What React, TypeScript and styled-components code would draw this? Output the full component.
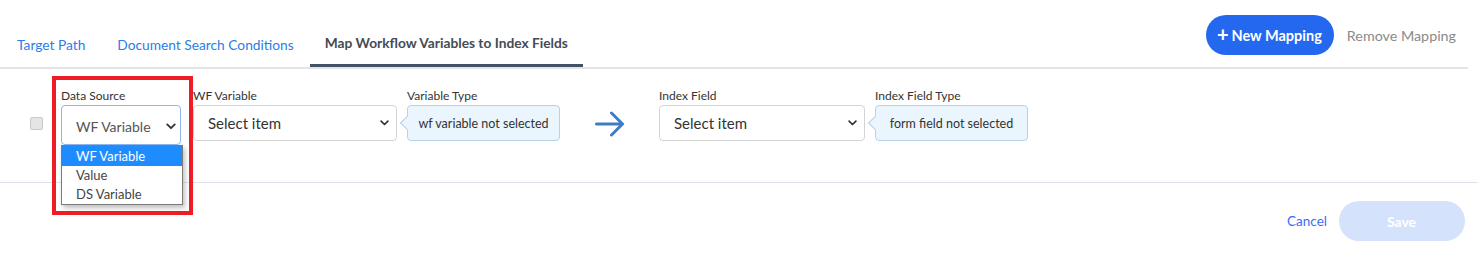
import React from "react";
import styled, { createGlobalStyle, css } from "styled-components";

const GlobalStyle = createGlobalStyle`
  html, body { margin: 0; padding: 0; background: #ffffff; }
  body { font-family: Lato, "Open Sans", sans-serif; color: #333; }
  * { box-sizing: border-box; }
`;

const Page = styled.div`
  width: 1484px;
  height: 264px;
  position: relative;
  overflow: hidden;
`;

const Header = styled.div`
  width: 1468px;
  height: 69px;
  display: flex;
  justify-content: space-between;
  align-items: stretch;
  border-bottom: 2px solid #e4e4e4;
`;

const Tabs = styled.div`
  display: flex;
  align-items: flex-end;
  padding-left: 1px;
`;

const Tab = styled.div<{ $active?: boolean }>`
  padding: 0 16px 10px;
  font-size: 13.75px;
  line-height: 18px;
  color: #2b7de9;
  border-bottom: 3px solid transparent;
  white-space: nowrap;
  ${(p) =>
    p.$active &&
    css`
      padding: 0 15px 12px;
      font-weight: 700;
      color: #444b55;
      border-bottom: 3px solid #435266;
    `}
`;

const Actions = styled.div`
  display: flex;
  align-items: center;
  gap: 13px;
  margin-top: 15px;
  align-self: flex-start;
  padding-right: 12px;
`;

const PrimaryButton = styled.button<{ $disabled?: boolean }>`
  height: 40px;
  border: none;
  border-radius: 20px;
  background: #2468ef;
  color: #fff;
  font-family: inherit;
  font-weight: 700;
  font-size: 14.5px;
  padding: 0 12px 0 11px;
  display: flex;
  align-items: center;
  gap: 3px;
  ${(p) =>
    p.$disabled &&
    css`
      background: #d5e2fb;
      width: 126px;
      justify-content: center;
      font-size: 14px;
    `}
`;

const Plus = styled.span`
  font-size: 20px;
  font-weight: 700;
  line-height: 1;
  margin-top: -2px;
`;

const TextButton = styled.span<{ $blue?: boolean }>`
  font-size: 14.3px;
  color: ${(p) => (p.$blue ? "#3b6cf4" : "#8a8a8a")};
  ${(p) => p.$blue && css`font-size: 13.5px;`}
`;

const Row = styled.div`
  width: 1478px;
  height: 114px;
  padding: 19px 0 0 30px;
  display: flex;
  align-items: flex-start;
  border-bottom: 1px solid #dde3ee;
`;

const Checkbox = styled.span`
  width: 13px;
  height: 13px;
  margin-top: 29px;
  margin-right: 18px;
  border: 1px solid #c9c9c9;
  border-radius: 2px;
  background: #e5e5e5;
`;

const Field = styled.div<{ $width: number; $gap?: number }>`
  width: ${(p) => p.$width}px;
  margin-right: ${(p) => p.$gap ?? 10}px;
  display: flex;
  flex-direction: column;
  position: relative;
`;

const Label = styled.label`
  font-size: 12px;
  line-height: 15px;
  color: #333;
  margin-bottom: 2px;
  white-space: nowrap;
`;

const SelectBox = styled.div<{ $focused?: boolean }>`
  height: ${(p) => (p.$focused ? 40 : 36)}px;
  border: 1px solid ${(p) => (p.$focused ? "#8db6f2" : "#d4d4d4")};
  border-radius: 4px;
  display: flex;
  align-items: center;
  justify-content: space-between;
  padding: 0 7px 0 14px;
  font-size: ${(p) => (p.$focused ? 14 : 15)}px;
  color: ${(p) => (p.$focused ? "#555" : "#333")};
  background: #fff;
  ${(p) => p.$focused && css`padding: 2px 4px 0 14px;`}
`;

const TypeBox = styled.div`
  height: 36px;
  border: 1px solid #b7d3ec;
  border-radius: 4px;
  background: #eaf5fd;
  display: flex;
  align-items: center;
  justify-content: center;
  font-size: 12.5px;
  color: #333;
  position: relative;
  &::before {
    content: "";
    position: absolute;
    left: -6px;
    top: 50%;
    width: 9px;
    height: 9px;
    margin-top: -5px;
    background: #eaf5fd;
    border-left: 1px solid #b7d3ec;
    border-bottom: 1px solid #b7d3ec;
    transform: rotate(45deg);
  }
`;

const ArrowSlot = styled.div`
  width: 30px;
  margin: 23px 34px 0 35px;
  color: #3d7cc9;
  display: flex;
`;

const DropList = styled.ul`
  position: absolute;
  left: 0;
  top: 57px;
  width: 122px;
  margin: 0;
  padding: 0;
  list-style: none;
  border: 1px solid #7a7a7a;
  background: #fff;
  box-shadow: 2px 3px 5px rgba(0, 0, 0, 0.25);
  z-index: 2;
`;

const DropItem = styled.li<{ $selected?: boolean }>`
  height: 19px;
  line-height: 19px;
  padding-left: 14px;
  font-size: 13px;
  color: ${(p) => (p.$selected ? "#fff" : "#444")};
  background: ${(p) => (p.$selected ? "#1e8cff" : "transparent")};
  ${(p) => p.$selected && css`height: 20px; line-height: 20px;`}
`;

const Highlight = styled.div`
  position: absolute;
  left: 52px;
  top: 76px;
  width: 141px;
  height: 139px;
  border: 4px solid #ee1c25;
  pointer-events: none;
  z-index: 3;
`;

const Footer = styled.div`
  width: 1465px;
  display: flex;
  justify-content: flex-end;
  align-items: center;
  gap: 12px;
  margin-top: 18px;
`;

const Chevron = ({ w, h }: { w: number; h: number }) => (
  <svg width={w} height={h} viewBox="0 0 12 8" fill="none">
    <path d="M1.5 1.5 L6 6 L10.5 1.5" stroke="#333" strokeWidth="2.2" strokeLinecap="round" strokeLinejoin="round" />
  </svg>
);

const Arrow = () => (
  <svg width="30" height="26" viewBox="0 0 30 26" fill="none">
    <path d="M1.5 13 H27" stroke="currentColor" strokeWidth="3" strokeLinecap="round" />
    <path d="M16.5 2 L27.5 13 L16.5 24" stroke="currentColor" strokeWidth="3" strokeLinecap="round" strokeLinejoin="round" />
  </svg>
);

export default function App() {
  return (
    <Page>
      <GlobalStyle />
      <Header>
        <Tabs>
          <Tab>Target Path</Tab>
          <Tab>Document Search Conditions</Tab>
          <Tab $active>Map Workflow Variables to Index Fields</Tab>
        </Tabs>
        <Actions>
          <PrimaryButton>
            <Plus>+</Plus>New Mapping
          </PrimaryButton>
          <TextButton>Remove Mapping</TextButton>
        </Actions>
      </Header>
      <Row>
        <Checkbox />
        <Field $width={120} $gap={12}>
          <Label>Data Source</Label>
          <SelectBox $focused>
            WF Variable
            <Chevron w={10} h={7} />
          </SelectBox>
          <DropList>
            <DropItem $selected>WF Variable</DropItem>
            <DropItem>Value</DropItem>
            <DropItem>DS Variable</DropItem>
          </DropList>
        </Field>
        <Field $width={204}>
          <Label>WF Variable</Label>
          <SelectBox>
            Select item
            <Chevron w={9} h={6} />
          </SelectBox>
        </Field>
        <Field $width={153} $gap={0}>
          <Label>Variable Type</Label>
          <TypeBox>wf variable not selected</TypeBox>
        </Field>
        <ArrowSlot>
          <Arrow />
        </ArrowSlot>
        <Field $width={206}>
          <Label>Index Field</Label>
          <SelectBox>
            Select item
            <Chevron w={9} h={6} />
          </SelectBox>
        </Field>
        <Field $width={153} $gap={0}>
          <Label>Index Field Type</Label>
          <TypeBox>form field not selected</TypeBox>
        </Field>
      </Row>
      <Footer>
        <TextButton $blue>Cancel</TextButton>
        <PrimaryButton $disabled>Save</PrimaryButton>
      </Footer>
      <Highlight />
    </Page>
  );
}
